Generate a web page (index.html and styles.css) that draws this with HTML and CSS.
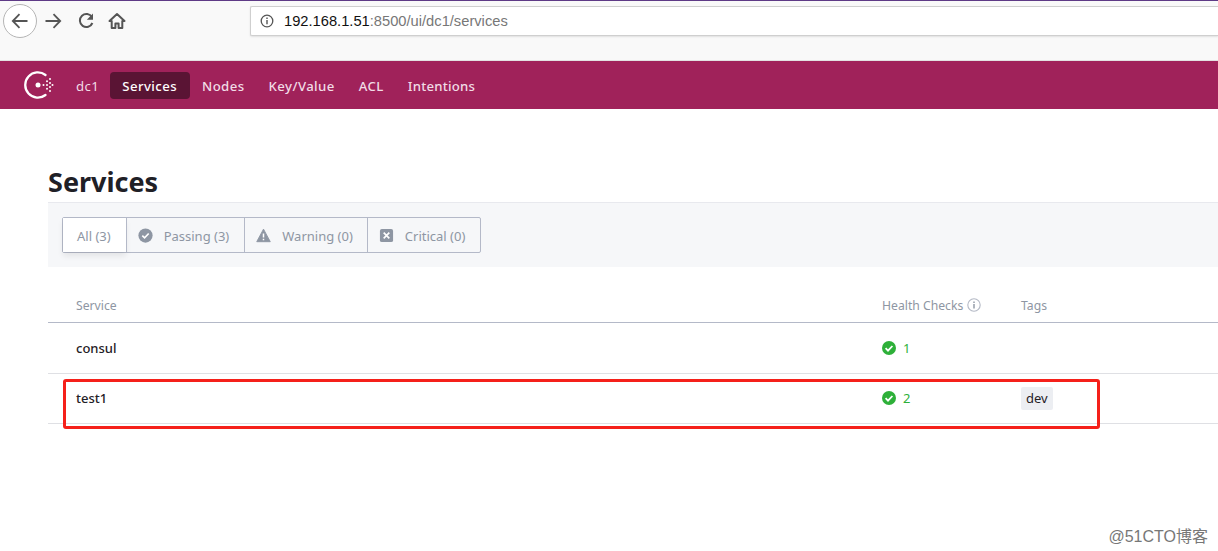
FILE: index.html
```html
<!DOCTYPE html>
<html lang="en">
<head>
<meta charset="utf-8">
<title>Services - Consul</title>
<link rel="stylesheet" href="styles.css">
</head>
<body>
<header class="browser">
  <div class="browser-btns">
    <span class="back"><svg width="20" height="20" viewBox="0 0 20 20"><path d="M17.5 10H3M9.5 3.2 2.8 10l6.7 6.8" fill="none" stroke="#555" stroke-width="1.8"/></svg></span>
    <svg class="bicon" width="20" height="20" viewBox="0 0 20 20"><path d="M2.5 10H17M10.5 3.2 17.2 10l-6.7 6.8" fill="none" stroke="#555" stroke-width="1.8"/></svg>
    <svg class="bicon" width="18" height="18" viewBox="0 0 18 18"><path d="M15 5.2A6.5 6.5 0 1 0 15.4 11" fill="none" stroke="#555" stroke-width="2"/><path d="M16 1.5v6.2H9.8z" fill="#555"/></svg>
    <svg class="bicon" width="18" height="18" viewBox="0 0 18 18"><path d="M9 2 1.5 9h2.2v7h3.7v-4.5h3.2V16h3.7V9h2.2z" fill="none" stroke="#555" stroke-width="2" stroke-linejoin="round"/></svg>
  </div>
  <div class="url">
    <svg width="14" height="14" viewBox="0 0 14 14"><circle cx="7" cy="7" r="5.8" fill="none" stroke="#555" stroke-width="1.3"/><path d="M7 6v4.2M7 3.5v1.4" stroke="#555" stroke-width="1.4"/></svg>
    <span class="url-text"><b>192.168.1.51</b>:8500/ui/dc1/services</span>
  </div>
</header>
<nav class="nav">
  <svg class="logo" width="30" height="30" viewBox="0 0 30 30">
    <path d="M21.5 5a12.6 12.6 0 1 0 0 20" fill="none" stroke="#fff" stroke-width="2.3" stroke-linecap="round"/>
    <circle cx="14" cy="15" r="2.5" fill="#fff"/>
    <g fill="#fff"><circle cx="19.5" cy="15" r="1"/><circle cx="23" cy="11.2" r="1"/><circle cx="23" cy="15" r="1"/><circle cx="23" cy="18.8" r="1"/><circle cx="26" cy="9" r="1"/><circle cx="26" cy="13" r="1"/><circle cx="26" cy="17" r="1"/><circle cx="26" cy="21" r="1"/><circle cx="28.5" cy="15" r="1"/></g>
  </svg>
  <a class="nav-item dc">dc1</a>
  <a class="nav-item active">Services</a>
  <a class="nav-item">Nodes</a>
  <a class="nav-item">Key/Value</a>
  <a class="nav-item">ACL</a>
  <a class="nav-item intentions">Intentions</a>
</nav>
<main class="main">
  <h1 class="title">Services</h1>
  <div class="filters">
    <div class="tabs">
      <span class="tab tab-active">All (3)</span>
      <span class="tab tab-passing"><svg width="15" height="15" viewBox="0 0 16 16"><circle cx="8" cy="8" r="7.6" fill="#8e96a3"/><path d="M4.6 8.2 7 10.5l4.4-4.6" fill="none" stroke="#fff" stroke-width="1.8"/></svg>Passing (3)</span>
      <span class="tab"><svg width="15" height="15" viewBox="0 0 16 16"><path d="M8 1.2 15.2 14.6H.8z" fill="#8e96a3" stroke="#8e96a3" stroke-linejoin="round"/><path d="M8 5.8v4.4M8 11.4v1.6" stroke="#fff" stroke-width="1.6"/></svg>Warning (0)</span>
      <span class="tab tab-critical"><svg width="15" height="15" viewBox="0 0 16 16"><rect x="1" y="1" width="14" height="14" rx="2" fill="#8e96a3"/><path d="M5 5l6 6M11 5l-6 6" stroke="#fff" stroke-width="1.8"/></svg>Critical (0)</span>
    </div>
  </div>
  <div class="table">
    <div class="row head">
      <span>Service</span>
      <span class="hc-head">Health Checks <svg width="14" height="14" viewBox="0 0 14 14"><circle cx="7" cy="7" r="6.2" fill="none" stroke="#b4b9c5" stroke-width="1.1"/><path d="M7 6v4.4M7 3.4v1.5" stroke="#8e96a3" stroke-width="1.4"/></svg></span>
      <span>Tags</span>
    </div>
    <div class="row row-first">
      <span class="name">consul</span>
      <span class="health"><svg width="14" height="14" viewBox="0 0 14 14"><circle cx="7" cy="7" r="7" fill="#2eb039"/><path d="M3.6 7.2 6 9.6l4.4-4.6" fill="none" stroke="#fff" stroke-width="1.8"/></svg>1</span>
      <span></span>
    </div>
    <div class="row">
      <span class="name">test1</span>
      <span class="health"><svg width="14" height="14" viewBox="0 0 14 14"><circle cx="7" cy="7" r="7" fill="#2eb039"/><path d="M3.6 7.2 6 9.6l4.4-4.6" fill="none" stroke="#fff" stroke-width="1.8"/></svg>2</span>
      <span><span class="tag">dev</span></span>
    </div>
  </div>
</main>
<div class="highlight"></div>
<div class="watermark">@51CTO博客</div>
</body>
</html>
```
FILE: styles.css
```css
* { box-sizing: border-box; }
html, body { margin: 0; padding: 0; }
body {
  width: 1218px;
  height: 551px;
  overflow: hidden;
  background: #fff;
  font-family: "Noto Sans", "Open Sans", sans-serif;
  position: relative;
}
.browser {
  height: 61px;
  background: #f9f9f9;
  border-top: 1px solid #5e3a86;
  border-bottom: 1px solid #e2e2e2;
  display: flex;
  align-items: flex-start;
  position: relative;
}
.browser-btns {
  display: flex;
  align-items: center;
  padding: 3px 0 0 3px;
}
.back {
  width: 34px;
  height: 34px;
  border: 1px solid #b5b5b5;
  border-radius: 50%;
  background: #fff;
  display: flex;
  align-items: center;
  justify-content: center;
}
.browser-btns .bicon:nth-child(2) { margin-left: 6px; }
.browser-btns .bicon:nth-child(3) { margin-left: 14px; }
.browser-btns .bicon:nth-child(4) { margin-left: 13px; }
.url {
  margin: 5px 0 0 124px;
  flex: 1;
  height: 30px;
  background: #fff;
  border: 1px solid #cfcfcf;
  border-right: 0;
  border-radius: 2px 0 0 2px;
  display: flex;
  align-items: center;
  padding-left: 9px;
  gap: 10px;
  font-family: "Liberation Sans", Arial, sans-serif;
  font-size: 14.7px;
  color: #777;
  box-shadow: 0 1px 2px rgba(0,0,0,.1);
}
.url b { font-weight: 400; color: #111; }
.nav {
  height: 48px;
  background: #a0225a;
  display: flex;
  align-items: center;
  padding-left: 24px;
}
.logo { margin-right: 10px; }
.nav-item {
  font-size: 13.2px;
  font-weight: 500;
  letter-spacing: .42px;
  color: #f1dce6;
  padding: 0 12px;
  height: 27px;
  line-height: 29px;
  border-radius: 4px;
}
.nav-item.dc { padding: 0 11px 0 12px; font-weight: 400; }
.nav-item.active { background: #5a1434; color: #fff; padding: 0 13px 0 12px; }
.nav-item.intentions { letter-spacing: .2px; }
.main { padding: 0 0 0 48px; }
.title {
  margin: 54px 0 0;
  height: 39px;
  font-size: 27px;
  line-height: 38px;
  font-weight: 700;
  color: #1f2026;
}
.filters {
  height: 65px;
  background: #f6f7f9;
  border-top: 1px solid #e8e9ee;
  padding: 14px 0 0 14px;
}
.tabs {
  display: inline-flex;
  height: 36px;
  border: 1px solid #b4b9c8;
  border-radius: 2px;
  font-size: 13px;
  color: #8e96a3;
}
.tab {
  display: flex;
  align-items: center;
  gap: 11px;
  padding: 2px 14px 0 11px;
  border-left: 1px solid #b4b9c8;
  white-space: nowrap;
}
.tab svg { margin-top: -2px; }
.tab:first-child { border-left: 0; padding: 2px 15px 0 14px; }
.tab-passing { padding-right: 15px; }
.tab-critical { padding-right: 15px; }
.tab-active {
  background: #fff;
  box-shadow: 0 4px 6px rgba(0,0,0,.08);
}
.table { margin-top: 17px; }
.row {
  display: grid;
  grid-template-columns: 806px 139px 1fr;
  padding-left: 28px;
  height: 50px;
  border-bottom: 1px solid #dfe0e4;
  font-size: 13px;
  align-items: center;
}
.row-first { height: 51px; padding-top: 1px; }
.row.head {
  height: 39px;
  padding-top: 4px;
  border-bottom-color: #b4b9c8;
  font-size: 12.2px;
  color: #8e96a3;
}
.hc-head { display: flex; align-items: center; gap: 4px; }
.name { font-weight: 500; color: #1f2026; position: relative; top: -1px; }
.health {
  display: flex;
  align-items: center;
  gap: 7px;
  color: #2eb039;
  position: relative;
  top: -1px;
}
.tag {
  display: inline-block;
  background: #eceef2;
  border-radius: 2px;
  padding: 0 5px;
  height: 23px;
  line-height: 23px;
  color: #1f2026;
}
.highlight {
  position: absolute;
  left: 63px;
  top: 379px;
  width: 1037px;
  height: 50px;
  border: 3px solid #f5201a;
  border-radius: 3px;
}
.watermark {
  position: absolute;
  right: 10px;
  top: 523px;
  font-family: "Liberation Sans", "Noto Sans CJK SC", sans-serif;
  font-size: 16px;
  color: #777;
}
```
